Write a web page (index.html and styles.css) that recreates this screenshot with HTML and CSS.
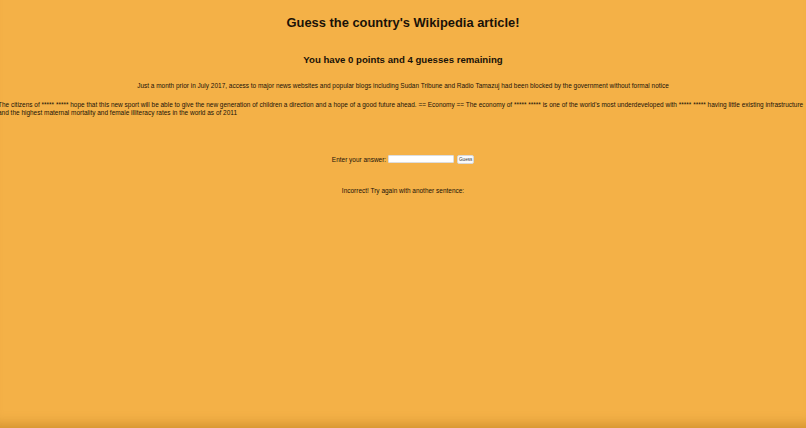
FILE: index.html
```html
<!DOCTYPE html>
<html lang="en">
<head>
<meta charset="utf-8">
<title>Guess the country</title>
<link rel="stylesheet" href="styles.css">
</head>
<body>
<main class="game">
  <h1 class="title">Guess the country's Wikipedia article!</h1>
  <h2 class="score">You have 0 points and 4 guesses remaining</h2>
  <p class="clue">Just a month prior in July 2017, access to major news websites and popular blogs including Sudan Tribune and Radio Tamazuj had been blocked by the government without formal notice</p>
  <p class="clue clue-wide">The citizens of ***** ***** hope that this new sport will be able to give the new generation of children a direction and a hope of a good future ahead. == Economy == The economy of ***** ***** is one of the world's most underdeveloped with ***** ***** having little existing infrastructure and the highest maternal mortality and female illiteracy rates in the world as of 2011</p>
  <form class="answer" onsubmit="return false">
    <label for="guess">Enter your answer:</label>
    <input id="guess" class="answer-input" type="text">
    <button class="answer-btn" type="submit">Guess</button>
  </form>
  <p class="feedback">Incorrect! Try again with another sentence:</p>
</main>
</body>
</html>
```
FILE: styles.css
```css
html, body {
  margin: 0;
  height: 100%;
}

body {
  background: #f4b147;
  font-family: "Liberation Sans", Arial, sans-serif;
  color: #1a1208;
  overflow: hidden;
  box-shadow: inset 0 -14px 12px -10px rgba(150, 90, 0, 0.35);
}

.game {
  display: flex;
  flex-direction: column;
  align-items: center;
  padding-top: 15px;
}

.title {
  margin: 0;
  font-size: 12.9px;
  line-height: 15px;
}

.score {
  margin: 24px 0 0;
  font-size: 9.65px;
  line-height: 11px;
}

.clue {
  margin: 17px 0 0;
  font-size: 6.47px;
  line-height: 8px;
  text-align: center;
}

/* the long clue is wider than the window and stays centred on it */
.clue-wide {
  flex: none;
  width: 810px;
  margin-top: 11px;
  text-align: left;
}

.answer {
  display: flex;
  align-items: center;
  margin-top: 37px;
  height: 10px;
  font-size: 6.47px;
}

.answer-input {
  box-sizing: border-box;
  width: 66px;
  height: 8px;
  padding: 0 1px;
  margin: 0 0 0 2px;
  border: 1px solid #ddd;
  border-radius: 1px;
  background: #fff;
  font-size: 6px;
}

.answer-btn {
  box-sizing: border-box;
  width: 17px;
  height: 9px;
  padding: 0;
  margin: 0 0 0 3px;
  border: 1px solid #d8d8d8;
  border-radius: 2px;
  background: #fafafa;
  font-family: "Liberation Sans", Arial, sans-serif;
  font-size: 4.6px;
  color: #333;
}

.feedback {
  margin: 23px 0 0;
  font-size: 6.47px;
  line-height: 8px;
}
```
